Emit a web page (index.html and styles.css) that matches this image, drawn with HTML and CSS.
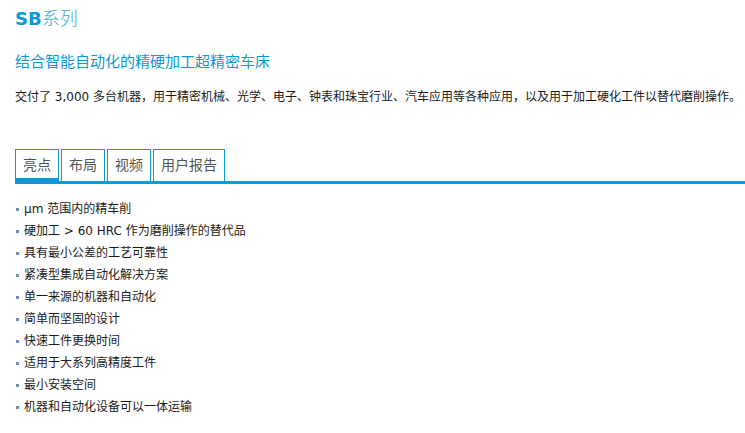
FILE: index.html
```html
<!DOCTYPE html>
<html lang="zh">
<head>
<meta charset="utf-8">
<link rel="stylesheet" href="styles.css">
</head>
<body>
<div class="page">
  <h1 class="title"><span class="title-sb">SB</span><span class="title-cn">系列</span></h1>
  <h2 class="subtitle">结合智能自动化的精硬加工超精密车床</h2>
  <p class="intro">交付了 3,000 多台机器，用于精密机械、光学、电子、钟表和珠宝行业、汽车应用等各种应用，以及用于加工硬化工件以替代磨削操作。</p>
  <div class="tabs">
    <div class="tab active">亮点</div>
    <div class="tab">布局</div>
    <div class="tab">视频</div>
    <div class="tab">用户报告</div>
  </div>
  <ul class="features">
    <li>μm 范围内的精车削</li>
    <li>硬加工 &gt; 60 HRC 作为磨削操作的替代品</li>
    <li>具有最小公差的工艺可靠性</li>
    <li>紧凑型集成自动化解决方案</li>
    <li>单一来源的机器和自动化</li>
    <li>简单而坚固的设计</li>
    <li>快速工件更换时间</li>
    <li>适用于大系列高精度工件</li>
    <li>最小安装空间</li>
    <li>机器和自动化设备可以一体运输</li>
  </ul>
</div>
</body>
</html>
```
FILE: styles.css
```css
html, body {
  margin: 0;
  padding: 0;
  background: #fff;
}
body {
  font-family: "DejaVu Sans", "Noto Sans CJK SC", sans-serif;
  color: #222;
}
.page {
  padding: 5px 0 0 15px;
}
.title {
  margin: 0;
  font-size: 18px;
  line-height: 24px;
  font-weight: normal;
  color: #0a9ad8;
}
.title-sb {
  font-weight: bold;
  font-family: "DejaVu Sans", sans-serif;
  color: #0a9ad8;
}
.title-cn {
  font-family: "Noto Sans CJK SC", sans-serif;
  font-weight: 300;
  color: #3aa8de;
}
.subtitle {
  margin: 20px 0 0 0;
  font-size: 15px;
  line-height: 22px;
  font-weight: normal;
  color: #0a9ad8;
}
.intro {
  margin: 15px 0 0 0;
  font-size: 12px;
  line-height: 18px;
  color: #1a1a1a;
}
.tabs {
  display: flex;
  gap: 2px;
  margin-top: 43px;
  border-bottom: 3px solid #0a9ad8;
}
.tab {
  border: 1px solid #0a9ad8;
  border-bottom: none;
  padding: 0 7px;
  height: 31px;
  line-height: 31px;
  font-size: 14px;
  color: #555;
}
.tab.active {
  box-shadow: inset 0 -3px 0 #0a9ad8;
}
.features {
  list-style: none;
  margin: 14px 0 0 0;
  padding: 0;
}
.features li {
  position: relative;
  padding-left: 9px;
  font-size: 12px;
  line-height: 22px;
  color: #1a1a1a;
}
.features li::before {
  content: "";
  position: absolute;
  left: 1px;
  top: 10px;
  width: 3px;
  height: 3px;
  background: #6d8db3;
}
```
